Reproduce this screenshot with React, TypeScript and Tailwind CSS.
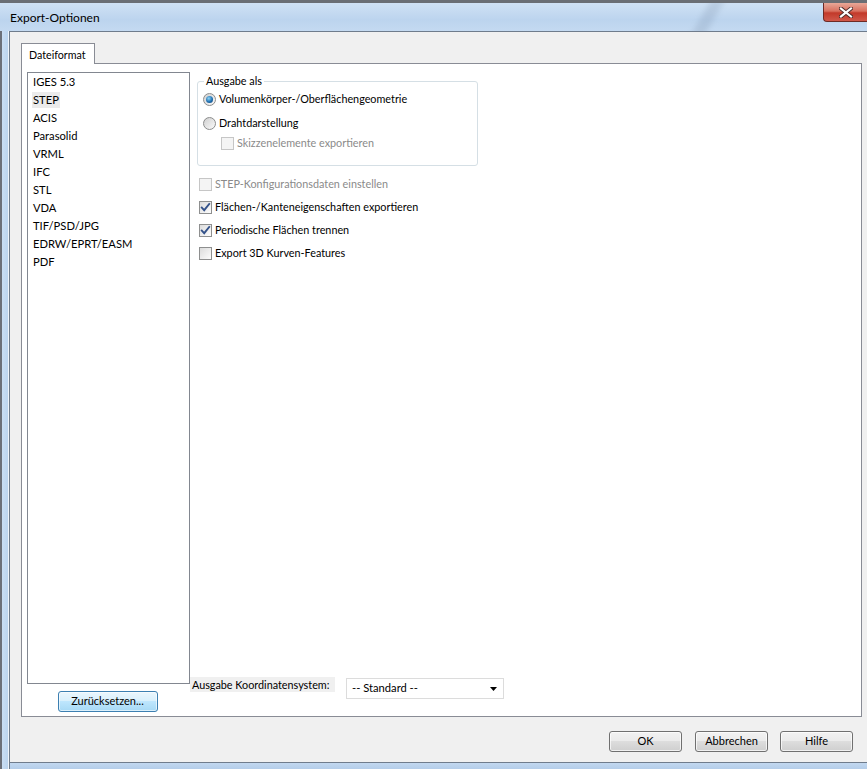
import React from "react";

const FONT = "font-['Lato','Liberation_Sans',sans-serif]";

function CheckBox({ checked = false, disabled = false }: { checked?: boolean; disabled?: boolean }) {
  return (
    <div
      className={`w-[13px] h-[13px] shrink-0 border ${
        disabled ? "border-[#c6c6c6] bg-[#f4f4f4]" : "border-[#8e8f8f] bg-[linear-gradient(135deg,#dcdcdc,#fdfdfd)]"
      } flex items-center justify-center`}
    >
      {checked && (
        <svg width="11" height="11" viewBox="0 0 11 11">
          <path d="M1.8 5.6 L4.2 8.2 L9.2 2" fill="none" stroke="#34528a" strokeWidth="1.9" strokeLinecap="square" />
        </svg>
      )}
    </div>
  );
}

function Radio({ checked = false }: { checked?: boolean }) {
  return (
    <div className="w-[13px] h-[13px] shrink-0 rounded-full border border-[#8b8c8c] bg-[linear-gradient(135deg,#d0d0d0,#fafafa)] flex items-center justify-center">
      {checked && (
        <div className="w-[7px] h-[7px] rounded-full bg-[radial-gradient(circle_at_40%_35%,#8fd6f7,#1f6fb0_55%,#0d3d73)]" />
      )}
    </div>
  );
}

function WinButton({ children, focused = false, w = "w-[73px]" }: { children: React.ReactNode; focused?: boolean; w?: string }) {
  return (
    <div
      className={`${w} h-[21px] rounded-[3px] border flex items-center justify-center text-[11px] text-black ${
        focused
          ? "border-[#3c7fb1] bg-[linear-gradient(to_bottom,#eaf6fd_0%,#d9f0fc_45%,#bee6fd_50%,#a7d9f5_100%)] shadow-[inset_0_0_0_1px_rgba(255,255,255,0.6)]"
          : "border-[#707070] bg-[linear-gradient(to_bottom,#f2f2f2_0%,#ebebeb_45%,#dddddd_50%,#cfcfcf_100%)] shadow-[inset_0_0_0_1px_rgba(255,255,255,0.7)]"
      }`}
    >
      {children}
    </div>
  );
}

const formats = ["IGES 5.3", "STEP", "ACIS", "Parasolid", "VRML", "IFC", "STL", "VDA", "TIF/PSD/JPG", "EDRW/EPRT/EASM", "PDF"];

export default function App() {
  return (
    <div className={`w-[867px] h-[769px] overflow-hidden flex flex-col bg-[#c2d8f0] ${FONT}`}>
      {/* top strip */}
      <div className="h-[3px] bg-[#6a6e74] shrink-0" />
      {/* title bar */}
      <div className="relative h-[28px] shrink-0 flex items-start bg-[linear-gradient(to_bottom,#cfe1f4,#bcd4ee_60%,#c4daf1)] overflow-hidden">
        <div className="absolute left-[700px] top-[-4px] w-[14px] h-[40px] -skew-x-[30deg] bg-[#7f93ad] opacity-25 blur-[3px]" />
        <div className="pl-[10px] pt-[8px] text-[12px] leading-[14px] text-black">Export-Optionen</div>
        <div className="ml-auto relative w-[44px] h-[19px] rounded-bl-[4px] border border-t-0 border-r-0 border-[#6d2a25] bg-[linear-gradient(to_bottom,#e8a898_0%,#d8705f_45%,#c2392a_55%,#d0584a_100%)] flex items-center justify-center">
          <svg width="14" height="11" viewBox="0 0 14 11">
            <path d="M2 1.5 L12 9.5 M12 1.5 L2 9.5" stroke="#4a2a28" strokeWidth="4" strokeLinecap="square" />
            <path d="M2 1.5 L12 9.5 M12 1.5 L2 9.5" stroke="#ffffff" strokeWidth="2.2" strokeLinecap="square" />
          </svg>
        </div>
      </div>
      {/* body */}
      <div className="flex flex-1 min-h-0">
        {/* left frame */}
        <div className="w-[2px] bg-[#6c7079] shrink-0" />
        <div className="w-[6px] bg-[linear-gradient(to_right,#c9def4,#bcd4ee)] shrink-0" />
        <div className="w-[1px] bg-[#eef4fb] shrink-0" />
        <div className="w-[1px] bg-[#6f7c8c] shrink-0" />
        {/* client */}
        <div className="flex-1 flex flex-col">
          <div className="h-[1px] bg-[#6f7c8c]" />
          <div className="flex-1 bg-[#f0f0f0] flex flex-col pt-[11px] pl-[11px]">
            {/* tab header */}
            <div className="flex">
              <div className="relative z-10 -mb-px w-[74px] h-[21px] border border-b-0 border-[#898c95] bg-white text-[10.7px] leading-[14px] pl-[7px] pt-[4px] text-black">
                Dateiformat
              </div>
            </div>
            {/* tab panel */}
            <div className="w-[841px] h-[654px] border border-[#898c95] bg-white flex pl-[5px] pt-[8px]">
              {/* left column */}
              <div className="w-[163px] flex flex-col items-center">
                <div className="w-[163px] h-[612px] border border-[#828790] bg-white flex flex-col">
                  {formats.map((f) => (
                    <div key={f} className="h-[18px] flex items-center pl-[5px] text-[11.2px] text-black">
                      <span className={f === "STEP" ? "bg-[#ebebeb] px-[1px] -ml-[1px]" : ""}>{f}</span>
                    </div>
                  ))}
                </div>
                <div className="mt-[7px] -ml-[2px]">
                  <WinButton focused w="w-[100px]">Zurücksetzen...</WinButton>
                </div>
              </div>
              {/* right column */}
              <div className="flex-1 flex flex-col">
                {/* group box */}
                <div className="relative ml-[7px] mt-[9px] w-[281px] h-[85px] rounded-[3px] border border-[#d5dfe5] pt-[5px] pl-[5px]">
                  <div className="absolute left-[6px] top-[-8px] bg-white px-[2px] text-[10.8px] leading-[14px] text-black">Ausgabe als</div>
                  <div className="h-[24px] flex items-center gap-[3px] text-[10.8px] text-black">
                    <Radio checked />
                    <span>Volumenkörper-/Oberflächengeometrie</span>
                  </div>
                  <div className="h-[24px] flex items-center gap-[3px] text-[10.8px] text-black">
                    <Radio />
                    <span>Drahtdarstellung</span>
                  </div>
                  <div className="h-[16px] flex items-center gap-[3px] pl-[18px] text-[10.8px] text-[#8a8a8a]">
                    <CheckBox disabled />
                    <span>Skizzenelemente exportieren</span>
                  </div>
                </div>
                {/* checkboxes */}
                <div className="mt-[7px] ml-[9px] flex flex-col text-[10.8px]">
                  <div className="h-[23px] flex items-center gap-[3px] text-[#8a8a8a]">
                    <CheckBox disabled />
                    <span>STEP-Konfigurationsdaten einstellen</span>
                  </div>
                  <div className="h-[23px] flex items-center gap-[3px] text-black">
                    <CheckBox checked />
                    <span>Flächen-/Kanteneigenschaften exportieren</span>
                  </div>
                  <div className="h-[23px] flex items-center gap-[3px] text-black">
                    <CheckBox checked />
                    <span>Periodische Flächen trennen</span>
                  </div>
                  <div className="h-[23px] flex items-center gap-[3px] text-black">
                    <CheckBox />
                    <span>Export 3D Kurven-Features</span>
                  </div>
                </div>
                {/* bottom row */}
                <div className="mt-auto mb-[17px] flex items-start">
                  <div className="w-[145px] h-[15px] mt-[-1px] bg-[#f0f0f0] pl-[2px] text-[10.8px] leading-[15px] text-black whitespace-nowrap">
                    Ausgabe Koordinatensystem:
                  </div>
                  <div className="ml-[11px] w-[158px] h-[21px] border border-[#dcdcdc] bg-white flex items-center pl-[5px] pr-[6px] text-[11.2px] text-black">
                    <span className="flex-1">-- Standard --</span>
                    <svg width="7" height="4" viewBox="0 0 7 4">
                      <path d="M0 0 H7 L3.5 4 Z" fill="#000" />
                    </svg>
                  </div>
                </div>
              </div>
            </div>
            {/* dialog buttons */}
            <div className="mt-[14px] flex pl-[588px]">
              <WinButton>OK</WinButton>
              <div className="ml-[13px]">
                <WinButton>Abbrechen</WinButton>
              </div>
              <div className="ml-[12px]">
                <WinButton>Hilfe</WinButton>
              </div>
            </div>
          </div>
          <div className="h-[1px] bg-[#6f7c8c]" />
          <div className="h-[6px] bg-[linear-gradient(to_bottom,#c2d8f0,#b4cde9)]" />
        </div>
      </div>
    </div>
  );
}
